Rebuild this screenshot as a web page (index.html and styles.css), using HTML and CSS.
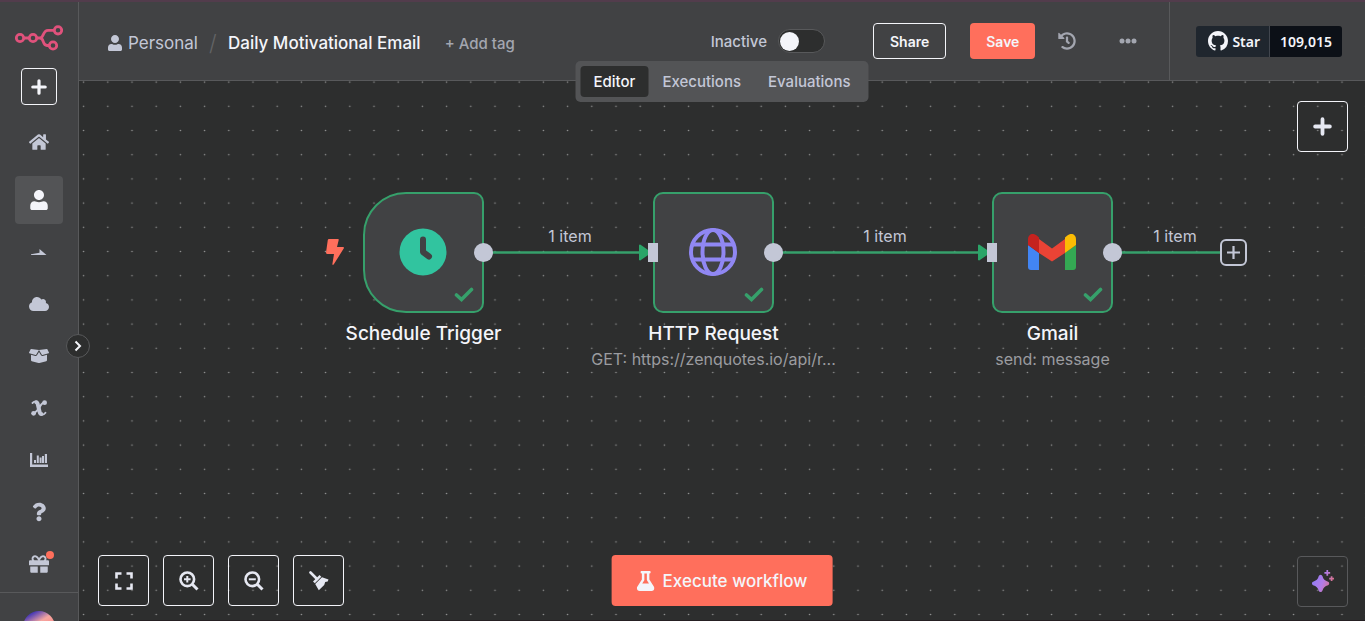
FILE: index.html
```html
<!DOCTYPE html>
<html lang="en">
<head>
<meta charset="utf-8">
<meta name="viewport" content="width=device-width, initial-scale=1">
<title>Daily Motivational Email</title>
<link rel="stylesheet" href="styles.css">
</head>
<body>
<svg class="defs" aria-hidden="true">
  <symbol id="user" viewBox="0 0 448 512"><path d="M224 256c70.7 0 128-57.3 128-128S294.700 0 224 0 96 57.300 96 128s57.300 128 128 128zM112 288C40 288 0 340 0 400V464c0 26.500 21.500 48 48 48h352c26.500 0 48-21.500 48-48v-64c0-60-40-112-112-112-30 0-60 24-112 24s-82-24-112-24z"/></symbol>
  <symbol id="plus" viewBox="0 0 16 16"><path d="M8 1.800v12.400M1.800 8h12.400" fill="none" stroke="currentColor" stroke-width="3.200" stroke-linecap="round"/></symbol>
  <symbol id="check" viewBox="0 0 20 16"><path d="M2.500 8 7.500 12.500 17.500 2.500" fill="none" stroke="currentColor" stroke-width="3.600" stroke-linecap="round"/></symbol>
</svg>
<div class="app">
  <aside class="sidebar">
    <svg class="logo" viewBox="0 0 48 26" role="img" aria-label="n8n">
      <g fill="none" stroke="#e0527c" stroke-width="2.800">
      <circle cx="5" cy="13" r="3.700"/><circle cx="18" cy="13" r="3.700"/><circle cx="43" cy="5.300" r="3.700"/><circle cx="38" cy="20.500" r="3.700"/>
      <path d="M8.700 13h5.600M21.700 13H25c4 0 2.500-7.700 8-7.700h6.300M25 13c4.500 0 2 7.500 7 7.500h2.300"/></g>
    </svg>
    <button class="new" type="button" aria-label="New"><svg class="i16"><use href="#plus"/></svg></button>
    <nav class="menu">
      <a class="item home" href="#" aria-label="Overview"><svg width="20" height="18" viewBox="0 0 576 512"><path d="M280.370 148.260L96 300.110V464a16 16 0 0 0 16 16l112.060-.29a16 16 0 0 0 15.920-16V368a16 16 0 0 1 16-16h64a16 16 0 0 1 16 16v95.640a16 16 0 0 0 16 16.050L464 480a16 16 0 0 0 16-16V300L295.670 148.260a12.190 12.190 0 0 0-15.300 0zM571.600 251.470L488 182.560V44.050a12 12 0 0 0-12-12h-56a12 12 0 0 0-12 12v72.610L318.470 43a48 48 0 0 0-61 0L4.340 251.470a12 12 0 0 0-1.600 16.900l25.500 31A12 12 0 0 0 45.150 301l235.220-193.740a12.190 12.190 0 0 1 15.300 0L530.900 301a12 12 0 0 0 16.900-1.600l25.500-31a12 12 0 0 0-1.700-16.930z"/></svg></a>
      <a class="item active" href="#" aria-label="Personal"><svg width="18" height="20"><use href="#user"/></svg></a>
      <a class="item" href="#" aria-label="Admin"><svg width="16" height="6" viewBox="0 0 16 6"><path d="M0 6V5.200l8.500-1.400V0L15.500 6z"/></svg></a>
      <a class="item" href="#" aria-label="Cloud"><svg width="20" height="16" viewBox="0 0 640 512"><path d="M537.600 226.600c4.100-10.700 6.400-22.400 6.400-34.600 0-53-43-96-96-96-19.700 0-38.100 6-53.300 16.200C367 64.200 315.300 32 256 32c-88.400 0-160 71.600-160 160 0 2.700.1 5.400.2 8.100C40.200 219.800 0 273.200 0 336c0 79.500 64.500 144 144 144h368c70.700 0 128-57.300 128-128 0-61.900-44-113.600-102.400-125.400z"/></svg></a>
      <a class="item" href="#" aria-label="Templates"><svg width="20" height="16" viewBox="0 0 640 512"><path d="M425.700 256c-16.900 0-32.800-9-41.400-23.400L320 126l-64.200 106.600c-8.700 14.500-24.600 23.500-41.500 23.500-4.500 0-9-.6-13.300-1.900L64 215v178c0 14.700 10 27.500 24.200 31l216.200 54.100c10.200 2.500 20.900 2.500 31 0L551.800 424c14.200-3.600 24.200-16.400 24.200-31V215l-137 39.100c-4.300 1.300-8.800 1.900-13.300 1.900zm212.600-112.200L586.800 41c-3.100-6.200-9.800-9.800-16.700-8.900L320 64l91.700 152.100c3.800 6.300 11.400 9.300 18.500 7.300l197.900-56.500c9.900-2.900 14.700-13.900 10.200-23.100zM53.200 41L1.700 143.800c-4.600 9.200.3 20.200 10.100 23l197.900 56.500c7.100 2 14.700-1 18.500-7.300L320 64 69.800 32.100c-6.900-.8-13.500 2.700-16.600 8.900z"/></svg></a>
      <a class="item" href="#" aria-label="Variables"><svg width="16" height="16" viewBox="0 0 16 16"><g fill="none" stroke="currentColor" stroke-linecap="round"><path d="M1.500 3Q3.500 1 5 1.500" stroke-width="1.800"/><path d="M5.300 2.200Q6.500 2.500 7 5l1.500 6.500q.6 2.500 1.800 2.500" stroke-width="4"/><path d="M10.500 14.800q2.500.2 4-2" stroke-width="1.800"/><path d="M13.500 2.500Q11.500 2 9 6.500T2.800 13.500" stroke-width="2"/></g><circle cx="13.600" cy="2.700" r="2.400"/><circle cx="2.600" cy="13.300" r="2.400"/></svg></a>
      <a class="item" href="#" aria-label="Insights"><svg width="18" height="14" viewBox="0 0 18 14"><path d="M0 0h2.200v11.500H18V14H0zM4 7h2v3H4zM6.800 2.500h2V10h-2zM9.600 4.500h2V10h-2zM12 3h2v7h-2zM14.800 1h2.200v9h-2.200z"/></svg></a>
      <a class="item" href="#" aria-label="Help"><svg width="14" height="20" viewBox="0 0 384 512"><path d="M202 0C122.200 0 70.500 32.700 29.900 91c-7.400 10.600-5.100 25.100 5.200 32.900l43.100 32.700c10.400 7.900 25.200 6 33.300-4.100 25-31.400 43.600-49.500 82.700-49.500 30.800 0 68.800 19.800 68.800 49.600 0 22.600-18.600 34.100-49 51.200-35.400 19.900-82.300 44.600-82.300 106.400V320c0 13.300 10.800 24 24 24h72.500c13.300 0 24-10.700 24-24v-5.800c0-42.900 125.300-44.600 125.300-160.600C377.500 66.300 286.900 0 202 0zM192 373.500c-38.200 0-69.300 31.100-69.300 69.300S153.800 512 192 512s69.300-31.100 69.300-69.300-31.100-69.200-69.300-69.200z"/></svg></a>
      <a class="item" href="#" aria-label="What's new"><svg width="20" height="20" viewBox="0 0 512 512"><path d="M32 448c0 17.700 14.300 32 32 32h160V320H32v128zm256 32h160c17.700 0 32-14.300 32-32V320H288v160zm192-320h-42.100c6.200-12.100 10.100-25.500 10.100-40 0-48.500-39.500-88-88-88-41.600 0-68.500 21.300-103 68.300-34.500-47-61.400-68.300-103-68.300-48.500 0-88 39.500-88 88 0 14.500 3.800 27.900 10.100 40H32c-17.700 0-32 14.300-32 32v80c0 8.800 7.200 16 16 16h480c8.800 0 16-7.200 16-16v-80c0-17.700-14.300-32-32-32zm-326.100 0c-22.100 0-40-17.900-40-40s17.900-40 40-40c19.900 0 34.600 3.300 86.100 80h-86.100zm206.100 0h-86.100c51.400-76.500 65.700-80 86.100-80 22.100 0 40 17.900 40 40s-17.900 40-40 40z"/></svg><span class="dot"></span></a>
    </nav>
    <div class="account"><span class="avatar"></span></div>
    <button class="expand" type="button" aria-label="Expand sidebar"><svg width="8" height="12" viewBox="0 0 8 12"><path d="M1.500 1.500 6 6l-4.500 4.500" fill="none" stroke="currentColor" stroke-width="2"/></svg></button>
  </aside>
  <main class="main">
    <header class="header">
      <div class="crumbs">
        <a class="owner" href="#"><svg width="14" height="16"><use href="#user"/></svg>Personal</a>
        <span class="slash">/</span>
        <h1 class="title">Daily Motivational Email</h1>
        <button class="tag" type="button">+ Add tag</button>
      </div>
      <div class="actions">
        <label class="status">Inactive <input class="switch" type="checkbox" role="switch"></label>
        <button class="btn share" type="button">Share</button>
        <button class="btn save" type="button">Save</button>
        <button class="bare" type="button" aria-label="History"><svg width="18" height="18" viewBox="0 0 512 512"><path d="M504 255.500c.3 136.700-111.200 248.400-247.800 248.500-59 0-113.200-20.500-155.800-54.900-11.100-8.900-11.900-25.500-1.900-35.600l11.300-11.300c8.600-8.600 22.400-9.600 31.900-2C173 425.100 212.800 440 256 440c101.700 0 184-82.300 184-184 0-101.700-82.300-184-184-184-48.800 0-93.100 19-126 49.900l50.700 50.800c10.100 10.100 2.900 27.300-11.300 27.300H24c-8.800 0-16-7.200-16-16V38.600C8 24.400 25.200 17.200 35.300 27.300l49.400 49.400C129.200 34.100 189.600 8 256 8c136.800 0 247.700 110.800 248 247.500zm-180.900 78.800 9.800-12.600c8.100-10.500 6.300-25.500-4.200-33.700L288 256.300V152c0-13.300-10.700-24-24-24h-16c-13.300 0-24 10.700-24 24v135.700l65.400 50.800c10.500 8.200 25.600 6.300 33.700-4.200z"/></svg></button>
        <button class="bare" type="button" aria-label="More"><svg width="18" height="6" viewBox="0 0 18 6"><circle cx="3" cy="3" r="2.500"/><circle cx="9" cy="3" r="2.500"/><circle cx="15" cy="3" r="2.500"/></svg></button>
      </div>
      <div class="github">
        <a class="star" href="#"><svg width="20" height="20" viewBox="0 0 16 16"><path d="M8 0C3.580 0 0 3.580 0 8c0 3.540 2.290 6.530 5.470 7.590.4.07.55-.17.55-.38 0-.19-.01-.82-.01-1.490-2.010.37-2.530-.49-2.690-.94-.09-.23-.48-.94-.82-1.130-.28-.15-.68-.52-.01-.53.63-.01 1.080.58 1.230.82.72 1.210 1.870.87 2.330.66.07-.52.28-.87.51-1.070-1.780-.2-3.640-.89-3.640-3.950 0-.87.31-1.590.82-2.150-.08-.2-.36-1.020.08-2.120 0 0 .67-.21 2.200.82.64-.18 1.320-.27 2-.27s1.360.09 2 .27c1.530-1.040 2.200-.82 2.200-.82.44 1.100.16 1.920.08 2.120.51.56.82 1.270.82 2.150 0 3.070-1.870 3.750-3.650 3.950.29.25.54.73.54 1.480 0 1.070-.01 1.930-.01 2.200 0 .21.15.46.55.38A8.010 8.010 0 0 0 16 8c0-4.420-3.580-8-8-8z"/></svg>Star</a><a class="count" href="#">109,015</a>
      </div>
    </header>
    <div class="tabs">
      <button class="tab on" type="button">Editor</button>
      <button class="tab" type="button">Executions</button>
      <button class="tab" type="button">Evaluations</button>
    </div>
    <section class="canvas" aria-label="Workflow canvas">
      <svg class="graph">
        <defs><pattern id="dots" x="-7.500" y="-11" width="24.200" height="24.200" patternUnits="userSpaceOnUse"><circle cx="12.100" cy="12.100" r=".8" fill="#949595"/></pattern></defs>
        <rect width="100%" height="100%" fill="url(#dots)"/>
        <path d="M405 171.500h160M695 171.500h208M1034 171.500h107" stroke="#36a06b" stroke-width="2.400"/>
        <path d="M561 164.500l10 7-10 7zM900 164.500l10 7-10 7z" fill="#2aa568" stroke="#2aa568" stroke-width="2" stroke-linejoin="round"/>
      </svg>
      <svg class="bolt" viewBox="0 0 18 26"><path d="M3 0h9q1 0 .7 1L11 8h6q1.500 0 .7 1.500L8 25q-1.500 2-1.600 0L8 15H1.500Q0 15 0 13.500L1.800 1Q2 0 3 0z" fill="#ff6f5c"/></svg>

      <article class="node trigger">
        <div class="box"><svg width="49" height="49" viewBox="0 0 49 49"><circle cx="24" cy="24" r="23.500" fill="#31c49f"/><path d="M24 11.500V24l6 4.500" fill="none" stroke="#414244" stroke-width="6" stroke-linecap="round" stroke-linejoin="round"/></svg>
          <svg class="done"><use href="#check"/></svg><span class="out"></span></div>
        <h2 class="name">Schedule Trigger</h2>
      </article>
      <article class="node http">
        <div class="box"><svg width="49" height="49" viewBox="0 0 49 49"><g fill="none" stroke="#9087f3" stroke-width="4"><circle cx="24" cy="24" r="22"/><ellipse cx="24" cy="24" rx="10.500" ry="22"/><path d="M4 16.500h40M4 31.500h40"/></g></svg>
          <svg class="done"><use href="#check"/></svg><span class="in"></span><span class="out"></span></div>
        <h2 class="name">HTTP Request</h2>
        <p class="sub">GET: https://zenquotes.io/api/r...</p>
      </article>
      <article class="node gmail">
        <div class="box"><svg width="49" height="37" viewBox="0 0 49 37"><path d="M0 11 11 19v17H3q-3 0-3-3z" fill="#4285f4"/><path d="M37 19l11-8v22q0 3-3 3h-8z" fill="#34a853"/><path d="M11 5l13 9.500L37 5v14L24 27.500 11 19z" fill="#ea4335"/><path d="M0 5.500C0 0 5-1.500 9 1.700L11 3.500V19L0 11z" fill="#c5221f"/><path d="M48 5.500C48 0 43-1.500 39 1.700L37 3.500V19l11-8z" fill="#fbbc04"/></svg>
          <svg class="done"><use href="#check"/></svg><span class="in"></span><span class="out"></span></div>
        <h2 class="name">Gmail</h2>
        <p class="sub">send: message</p>
      </article>
      <span class="edge first">1 item</span>
      <span class="edge second">1 item</span>
      <span class="edge third">1 item</span>
      <button class="append" type="button" aria-label="Add next node"><svg width="13" height="13" viewBox="0 0 13 13"><path d="M6.500 0v13M0 6.500h13" stroke="currentColor" stroke-width="2.200"/></svg></button>

      <button class="tool corner top" type="button" aria-label="Add node"><svg width="19" height="19"><use href="#plus"/></svg></button>
      <div class="tools">
        <button class="tool" type="button" aria-label="Fit view"><svg width="18" height="18" viewBox="0 0 18 18"><path d="M1.500 6.500v-5h5M11.500 1.500h5v5M16.500 11.500v5h-5M6.500 16.500h-5v-5" fill="none" stroke="currentColor" stroke-width="2.600"/></svg></button>
        <button class="tool" type="button" aria-label="Zoom in"><svg width="20" height="20" viewBox="0 0 20 20"><path d="M13.500 13.500l5 5" stroke="currentColor" stroke-width="3"/><path d="M8.300 5v6.600M5 8.300h6.600" stroke="currentColor" stroke-width="2"/><circle cx="8.300" cy="8.300" r="6.800" fill="none" stroke="currentColor" stroke-width="2.600"/></svg></button>
        <button class="tool" type="button" aria-label="Zoom out"><svg width="20" height="20" viewBox="0 0 20 20"><path d="M13.500 13.500l5 5" stroke="currentColor" stroke-width="3"/><path d="M4.800 8.300h7" stroke="currentColor" stroke-width="2"/><circle cx="8.300" cy="8.300" r="6.800" fill="none" stroke="currentColor" stroke-width="2.600"/></svg></button>
        <button class="tool" type="button" aria-label="Tidy up"><svg width="20" height="20" viewBox="0 0 20 20"><path d="M1.500 1.500 8 8" stroke="currentColor" stroke-width="2.600" stroke-linecap="round"/><path d="M4 10.500 10.500 4l1.800 1.800L5.800 12.300z"/><path d="M6.200 13 13 6.200l6.500 2.300-.8 2-2.500.4-1 3-5.400 5.300z"/></svg></button>
      </div>
      <button class="run" type="button"><svg width="18" height="20" viewBox="0 0 448 512"><path d="M437.200 403.500L320 215V64h8c13.300 0 24-10.700 24-24V24c0-13.300-10.700-24-24-24H120c-13.300 0-24 10.700-24 24v16c0 13.300 10.700 24 24 24h8v151L10.800 403.500C-18.500 450.600 15.300 512 70.900 512h306.200c55.700 0 89.400-61.500 60.100-108.500zM137.900 320l48.200-77.600c3.700-5.200 5.800-11.600 5.800-18.400V64h64v160c0 6.900 2.200 13.200 5.800 18.400l48.200 77.600h-172z"/></svg>Execute workflow</button>
      <button class="tool corner ai" type="button" aria-label="Ask AI"><svg width="23" height="23" viewBox="0 0 24 24"><defs><linearGradient id="spark" gradientUnits="userSpaceOnUse" x1="2" y1="8" x2="23" y2="16"><stop offset="0" stop-color="#8f7cf5"/><stop offset=".5" stop-color="#b27be6"/><stop offset="1" stop-color="#e0707c"/></linearGradient></defs><path d="M10 5q1.500 0 2 1.600 1 4.400 5.800 5.600Q19 12.600 19 14t-1.200 1.800Q13 17 12 21.400 11.500 23 10 23t-2-1.600Q7 17 2.200 15.800 1 15.400 1 14t1.200-1.800Q7 11 8 6.600 8.500 5 10 5z" fill="url(#spark)"/><path d="M17 0v6M14 3h6M21.500 6.500v5M19 9h5" stroke="url(#spark)" stroke-width="1.800"/></svg></button>
    </section>
  </main>
</div>
</body>
</html>
```
FILE: styles.css
```css
* { box-sizing: border-box; }
body { margin: 0; background: #2d2e2e; color: #f4f5fa; font-family: Inter, "Liberation Sans", sans-serif; font-size: 15px; }
button { font: inherit; color: inherit; background: none; border: 0; padding: 0; cursor: pointer; }
a { color: inherit; text-decoration: none; }
h1, h2, p { margin: 0; }
svg { display: block; fill: currentColor; flex: none; }
.defs { position: absolute; width: 0; height: 0; }
.app { display: flex; height: 100vh; overflow: hidden; border-top: 2px solid #523c4c; }

.sidebar { position: relative; z-index: 2; flex: none; width: 79px; display: flex; flex-direction: column; align-items: center; background: #414244; border-right: 1px solid #58595b; padding-top: 23px; }
.logo { width: 48px; height: 26px; }
.new { flex: none; width: 36px; height: 37px; margin-top: 17px; border: 1px solid #f4f5fa; border-radius: 4px; display: grid; place-items: center; }
.i16 { width: 16px; height: 16px; }
.menu { flex: none; display: flex; flex-direction: column; gap: 4px; padding-top: 13px; }
.item { position: relative; width: 48px; height: 48px; display: grid; place-items: center; border-radius: 4px; color: #c3c7d6; }
.home { margin-bottom: 6px; }
.active { background: #535456; color: #f4f5fa; }
.dot { position: absolute; top: 11px; right: 9px; width: 8px; height: 8px; border-radius: 50%; background: #ff6f5c; }
.account { align-self: stretch; flex: none; display: flex; justify-content: center; margin-top: 4px; padding-top: 18px; border-top: 1px solid #58595b; }
.avatar { width: 32px; height: 32px; border-radius: 50%; background: linear-gradient(150deg, #4a3ab4 15%, #f4a6a0 40%, #ff7f7f 70%); }
.expand { position: absolute; right: -12px; top: 332px; width: 24px; height: 24px; border-radius: 50%; background: #2d2e2e; border: 1px solid #58595b; display: grid; place-items: center; }

.main { position: relative; flex: 1; min-width: 0; display: flex; flex-direction: column; }
.header { flex: none; height: 79px; display: flex; background: #414244; border-bottom: 1px solid #58595b; }
.crumbs { flex: 1; display: flex; align-items: center; padding-left: 29px; padding-top: 4px; font-size: 17px; white-space: nowrap; }
.owner { display: flex; align-items: center; gap: 6px; color: #c3c7d6; }
.slash { width: 30px; text-align: center; font-size: 22px; font-weight: 300; color: #636466; }
.title { font-size: 17px; font-weight: 500; }
.tag { margin-left: 24px; font-size: 15px; font-weight: 500; color: #a3a6b0; }
.actions { display: flex; align-items: center; padding-right: 32px; }
.status { display: flex; align-items: center; gap: 11px; margin-right: 48px; font-weight: 500; color: #c3c7d6; }
.switch { appearance: none; margin: 0; width: 47px; height: 24px; border: 1px solid #58595b; border-radius: 12px; background: #2d2e2e; display: flex; align-items: center; padding: 1px; }
.switch::before { content: ""; width: 19px; height: 19px; border-radius: 50%; background: #f4f5fa; }
.switch:checked { justify-content: flex-end; }
.btn { height: 36px; padding: 0 16px; border-radius: 4px; font-size: 14px; font-weight: 600; }
.share { border: 1px solid #f4f5fa; margin-right: 24px; }
.save { background: #ff6f5c; margin-right: 23px; }
.bare { width: 18px; height: 36px; display: grid; place-items: center; color: #a3a6b0; }
.bare + .bare { margin-left: 43px; }
.github { display: flex; align-items: center; padding: 0 23px 0 26px; border-left: 1px solid #58595b; font: 600 14px/31px "Noto Sans", sans-serif; }
.star, .count { height: 31px; display: flex; align-items: center; }
.star { gap: 4px; padding: 0 9px 0 12px; background: #1f262e; border-radius: 3px 0 0 3px; border-right: 1px solid #41464e; }
.count { padding: 0 10px; background: #0c1017; border-radius: 0 3px 3px 0; }

.tabs { position: absolute; z-index: 1; top: 59px; left: 50%; transform: translateX(-50%); display: flex; gap: 1px; padding: 5px; background: #535456; border-radius: 5px; font-weight: 500; color: #c3c7d6; }
.tab { height: 31px; padding: 0 13px; border-radius: 4px; }
.on { background: #2d2e2e; color: #f4f5fa; }

.canvas { position: relative; flex: 1; min-height: 0; overflow: hidden; border-bottom: 1px solid #251f22; }
.graph { width: 100%; height: 100%; }
.node { position: absolute; top: 111px; width: 121px; display: flex; flex-direction: column; align-items: center; white-space: nowrap; }
.trigger { left: 284px; }
.http { left: 574px; }
.gmail { left: 913px; }
.box { position: relative; width: 121px; height: 121px; display: grid; place-items: center; background: #414244; border: 2px solid #36a06b; border-radius: 10px; }
.trigger .box { border-radius: 43px 10px 10px 43px; }
.done { position: absolute; right: 8px; bottom: 8px; width: 20px; height: 16px; color: #36a06b; }
.in, .out { position: absolute; top: 49px; height: 19px; background: #c3c7d6; }
.in { left: -7px; width: 10px; }
.out { right: -11px; width: 19px; border-radius: 50%; }
.name { margin-top: 8px; font-size: 19px; line-height: 26px; font-weight: 500; }
.sub { font-size: 16px; line-height: 24px; color: #9b9ca0; }
.bolt { position: absolute; left: 247px; top: 158px; width: 18px; height: 26px; }
.edge { position: absolute; top: 144px; line-height: 22px; font-size: 16px; color: #c3c7d6; transform: translateX(-50%); }
.first { left: 491px; }
.second { left: 806px; }
.third { left: 1096px; }
.append { position: absolute; left: 1141px; top: 158px; width: 27px; height: 27px; display: grid; place-items: center; border: 2px solid #c3c7d6; border-radius: 6px; background: #2d2e2e; color: #c3c7d6; }

.tool { width: 51px; height: 51px; display: grid; place-items: center; border: 1px solid #f4f5fa; border-radius: 4px; color: #e6e8f2; }
.corner { position: absolute; right: 17px; }
.top { top: 20px; }
.ai { bottom: 13px; border-color: #58595b; }
.tools { position: absolute; left: 19px; bottom: 14px; display: flex; gap: 14px; }
.run { position: absolute; left: 50%; bottom: 14px; transform: translateX(-50%); height: 51px; padding: 0 25px; display: flex; align-items: center; gap: 8px; border-radius: 4px; background: #ff6f5c; font-size: 17px; font-weight: 500; white-space: nowrap; }
```
